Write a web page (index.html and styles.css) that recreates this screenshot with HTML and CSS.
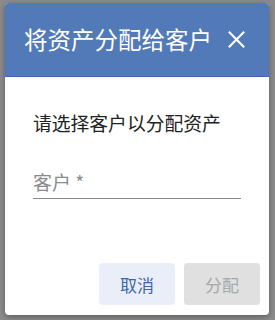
FILE: index.html
```html
<!DOCTYPE html>
<html>
<head>
<meta charset="utf-8">
<link rel="stylesheet" href="styles.css">
</head>
<body>
<div class="backdrop">
  <div class="dialog">
    <div class="header">
      <h1 class="title">将资产分配给客户</h1>
      <svg class="close" viewBox="0 0 16 16" width="17" height="17"><path d="M1.5 1.5L14.5 14.5M14.5 1.5L1.5 14.5" stroke="#fff" stroke-width="2" stroke-linecap="square"/></svg>
    </div>
    <div class="content">
      <p class="prompt">请选择客户以分配资产</p>
      <div class="field">
        <span class="label">客户 *</span>
      </div>
    </div>
    <div class="actions">
      <button class="btn btn-cancel">取消</button>
      <button class="btn btn-assign" disabled>分配</button>
    </div>
  </div>
</div>
</body>
</html>
```
FILE: styles.css
```css
html, body {
  margin: 0;
  padding: 0;
  width: 275px;
  height: 320px;
  overflow: hidden;
  font-family: Roboto, "Noto Sans CJK SC", sans-serif;
}
.backdrop {
  width: 275px;
  height: 320px;
  background: #8c8c8c;
  padding: 3px 6px 5px 5px;
  box-sizing: border-box;
}
.dialog {
  height: 100%;
  background: #fff;
  border-radius: 4px;
  overflow: hidden;
  display: flex;
  flex-direction: column;
  box-shadow: 0 2px 6px rgba(0,0,0,0.35);
}
.header {
  height: 74px;
  background: #5279b8;
  border-bottom: 1px solid #3b66b0;
  display: flex;
  align-items: center;
  padding: 0 24px 0 19px;
  box-sizing: border-box;
  flex: none;
}
.title {
  margin: 0;
  flex: 1;
  color: #fff;
  font-size: 23.5px;
  font-weight: 400;
  line-height: 1;
  font-family: "Noto Sans CJK SC", sans-serif;
}
.close {
  flex: none;
}
.content {
  padding: 34px 28px 0 28px;
  flex: 1;
}
.prompt {
  margin: 0;
  font-size: 18.8px;
  line-height: 24px;
  color: #222;
  font-family: "Noto Sans CJK SC", sans-serif;
}
.field {
  margin-top: 35px;
  border-bottom: 1px solid #8a8a8a;
  padding-bottom: 4px;
}
.label {
  display: block;
  font-size: 19px;
  line-height: 24px;
  color: #8a8a8a;
  font-family: "Noto Sans CJK SC", sans-serif;
}
.actions {
  display: flex;
  justify-content: flex-end;
  gap: 9px;
  padding: 0 9px 10px 0;
  flex: none;
}
.btn {
  width: 76px;
  height: 42px;
  border: none;
  border-radius: 4px;
  font-size: 17px;
  font-family: "Noto Sans CJK SC", sans-serif;
  padding: 0;
}
.btn-cancel {
  background: #e9eef8;
  color: #3e65ac;
}
.btn-assign {
  background: #e0e0e0;
  color: #a8a8a8;
}
```
